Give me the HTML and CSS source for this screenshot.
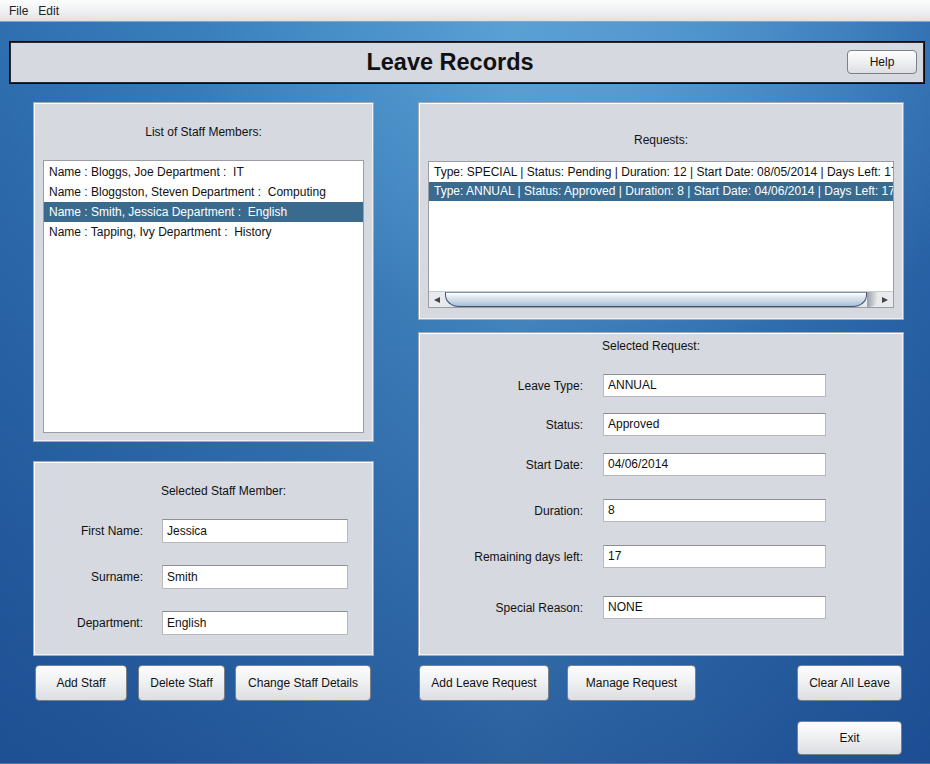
FILE: index.html
```html
<!DOCTYPE html>
<html>
<head>
<meta charset="utf-8">
<link rel="stylesheet" href="styles.css">
</head>
<body>
<div class="menubar"><span class="menu">File</span><span class="menu">Edit</span></div>
<div class="desk">
  <div class="titlebar">
    <h1 class="title">Leave Records</h1>
    <button class="btn help">Help</button>
  </div>
  <div class="columns">
    <div class="col left">
      <div class="panel staff-list">
        <div class="panel-label">List of Staff Members:</div>
        <div class="listbox staffbox">
          <div class="row">Name : Bloggs, Joe Department :&nbsp; IT</div>
          <div class="row">Name : Bloggston, Steven Department :&nbsp; Computing</div>
          <div class="row sel">Name : Smith, Jessica Department :&nbsp; English</div>
          <div class="row">Name : Tapping, Ivy Department :&nbsp; History</div>
        </div>
      </div>
      <div class="panel staff-sel">
        <div class="panel-label staff-sel-label">Selected Staff Member:</div>
        <div class="form staff-form">
          <div class="field"><span class="flabel">First Name:</span><span class="input">Jessica</span></div>
          <div class="field"><span class="flabel">Surname:</span><span class="input">Smith</span></div>
          <div class="field"><span class="flabel">Department:</span><span class="input">English</span></div>
        </div>
      </div>
      <div class="btnrow left-btns">
        <button class="btn b-add">Add Staff</button>
        <button class="btn b-del">Delete Staff</button>
        <button class="btn b-chg">Change Staff Details</button>
      </div>
    </div>
    <div class="col right">
      <div class="panel requests">
        <div class="panel-label req-label">Requests:</div>
        <div class="listbox reqbox">
          <div class="reqrows">
            <div class="row">Type: SPECIAL | Status: Pending | Duration: 12 | Start Date: 08/05/2014 | Days Left: 17</div>
            <div class="row sel">Type: ANNUAL | Status: Approved | Duration: 8 | Start Date: 04/06/2014 | Days Left: 17</div>
          </div>
          <div class="hscroll">
            <div class="arrow"><svg width="8" height="8" viewBox="0 0 8 8"><path d="M1 4 L7 1 L7 7 Z" fill="#444"/></svg></div>
            <div class="track"><div class="thumb"></div><div class="thumb-shadow"></div></div>
            <div class="arrow"><svg width="8" height="8" viewBox="0 0 8 8"><path d="M7 4 L1 1 L1 7 Z" fill="#444"/></svg></div>
          </div>
        </div>
      </div>
      <div class="panel req-sel">
        <div class="panel-label rsel-label">Selected Request:</div>
        <div class="form req-form">
          <div class="field f1"><span class="flabel">Leave Type:</span><span class="input">ANNUAL</span></div>
          <div class="field f2"><span class="flabel">Status:</span><span class="input">Approved</span></div>
          <div class="field f3"><span class="flabel">Start Date:</span><span class="input">04/06/2014</span></div>
          <div class="field f4"><span class="flabel">Duration:</span><span class="input">8</span></div>
          <div class="field f5"><span class="flabel">Remaining days left:</span><span class="input">17</span></div>
          <div class="field f6"><span class="flabel">Special Reason:</span><span class="input">NONE</span></div>
        </div>
      </div>
      <div class="btnrow right-btns">
        <button class="btn b-alr">Add Leave Request</button>
        <button class="btn b-mng">Manage Request</button>
        <span class="spacer"></span>
        <button class="btn b-clr">Clear All Leave</button>
      </div>
      <div class="btnrow exit-row">
        <button class="btn b-exit">Exit</button>
      </div>
    </div>
  </div>
</div>
</body>
</html>
```

FILE: styles.css
```css
* { box-sizing: border-box; }
html, body { margin: 0; padding: 0; }
body {
  width: 930px;
  height: 764px;
  overflow: hidden;
  font-family: "Liberation Sans", Arial, sans-serif;
  font-size: 12px;
  color: #111;
  background: #2c66a6;
}
.menubar {
  height: 22px;
  background: linear-gradient(#fbfcfc 0%, #f1f2f3 50%, #dfe1e4 100%);
  border-bottom: 1px solid #9c9fa3;
  display: flex;
  align-items: center;
  padding-left: 9px;
  gap: 10px;
  font-size: 12px;
  color: #222;
}
.desk {
  height: 742px;
  padding: 19px 5px 0 9px;
  background:
    radial-gradient(ellipse 420px 260px at 620px 60px, rgba(110,175,225,0.45), rgba(110,175,225,0) 100%),
    linear-gradient(180deg, rgba(40,110,180,0) 0%, rgba(18,58,128,0.6) 100%),
    linear-gradient(90deg, #2f6fb0 0%, #3c82be 25%, #4890c8 45%, #539ace 55%, #4187c2 75%, #2d6bae 100%);
  border-bottom: 1px solid #6c7077;
}
.titlebar {
  height: 43px;
  width: 916px;
  background: #d6d9e0;
  border: 1px solid #0a0a0a;
  box-shadow: inset 0 0 0 1px #2a2a2a;
  display: flex;
  align-items: center;
  justify-content: center;
  position: relative;
}
.title {
  margin: 0;
  font-size: 23.5px;
  font-weight: bold;
  color: #111;
  transform: translateX(-17px);
}
.btn {
  font-family: "Liberation Sans", Arial, sans-serif;
  font-size: 12px;
  color: #111;
  background: linear-gradient(#fdfdfd 0%, #f0f1f3 45%, #dcdee2 100%);
  border: 1px solid #7d8087;
  border-radius: 4px;
  padding: 0;
  box-shadow: inset 0 1px 0 #fff;
}
.help {
  position: absolute;
  right: 7px;
  top: 8px;
  width: 70px;
  height: 24px;
}
.columns {
  display: flex;
  gap: 44px;
  margin-top: 18px;
  padding-left: 24px;
}
.col { display: flex; flex-direction: column; }
.left { width: 341px; }
.right { width: 486px; }
.panel {
  background: #d6d9e0;
  border: 1px solid #a3a7ae;
  box-shadow: inset 1px 1px 0 #ffffff, inset -1px -1px 0 #eef0f3;
  display: flex;
  flex-direction: column;
}
.panel-label { text-align: center; }
.staff-list { height: 340px; padding: 22px 9px 8px 9px; }
.staff-list .panel-label { margin-bottom: 21px; }
.listbox {
  background: #fff;
  border: 1px solid #9a9da3;
}
.staffbox { flex: 1; padding-top: 1px; }
.row {
  height: 20px;
  line-height: 20px;
  padding-left: 5px;
  white-space: nowrap;
  overflow: hidden;
}
.row.sel { background: #3a6b8f; color: #fff; }
.staff-sel { height: 195px; margin-top: 19px; padding: 22px 0 0 0; }
.staff-sel-label { padding-left: 40px; margin-bottom: 21px; }
.field { display: flex; align-items: center; }
.flabel { text-align: right; }
.input {
  background: #fff;
  border: 1px solid #b7b9bd;
  border-top-color: #8d8f93;
  height: 24px;
  line-height: 22px;
  padding-left: 4px;
  color: #111;
}
.staff-form { display: flex; flex-direction: column; gap: 22px; }
.staff-form .flabel { width: 109px; }
.staff-form .input { width: 186px; margin-left: 19px; }
.btnrow { display: flex; }
.left-btns { margin-top: 9px; padding-left: 2px; }
.left-btns .btn { height: 36px; }
.b-add { width: 92px; }
.b-del { width: 87px; margin-left: 11px; }
.b-chg { width: 136px; margin-left: 10px; }
.requests { height: 218px; padding: 30px 9px 11px 9px; }
.req-label { margin-bottom: 14px; }
.reqbox { flex: 1; display: flex; flex-direction: column; }
.reqrows { flex: 1; padding-top: 1px; }
.reqbox .row { height: 19px; line-height: 19px; padding-left: 5px; }
.hscroll {
  height: 16px;
  display: flex;
  background: #e6e8ec;
  border-top: 1px solid #c9ccd1;
}
.arrow {
  width: 17px;
  display: flex;
  align-items: center;
  justify-content: center;
  background: #e8eaed;
}
.track { flex: 1; display: flex; }
.thumb {
  width: 422px;
  height: 15px;
  border: 1px solid #3d5575;
  border-top-color: #7d93ad;
  border-radius: 0 0 14px 14px / 0 0 12px 12px;
  background: linear-gradient(#ffffff 0%, #dde6ef 35%, #c3d3e3 70%, #a9bdd2 100%);
}
.thumb-shadow {
  width: 10px;
  height: 15px;
  background: linear-gradient(90deg, #9aa0a8, #e3e5e8);
  border-radius: 0 0 8px 0;
}
.req-sel { height: 324px; margin-top: 12px; padding: 6px 0 0 0; }
.rsel-label { margin-left: -20px; margin-bottom: 21px; }
.req-form { display: flex; flex-direction: column; }
.req-form .flabel { width: 164px; }
.req-form .input { width: 223px; margin-left: 20px; height: 23px; line-height: 21px; }
.f2 { margin-top: 16px; }
.f3 { margin-top: 17px; }
.f4 { margin-top: 23px; }
.f5 { margin-top: 23px; }
.f6 { margin-top: 28px; }
.right-btns { margin-top: 9px; padding-left: 1px; }
.right-btns .btn { height: 36px; }
.b-alr { width: 130px; }
.b-mng { width: 129px; margin-left: 18px; }
.spacer { flex: 1; }
.b-clr { width: 105px; margin-right: 2px; }
.exit-row { justify-content: flex-end; margin-top: 20px; }
.b-exit { width: 105px; height: 34px; margin-right: 2px; }
```
